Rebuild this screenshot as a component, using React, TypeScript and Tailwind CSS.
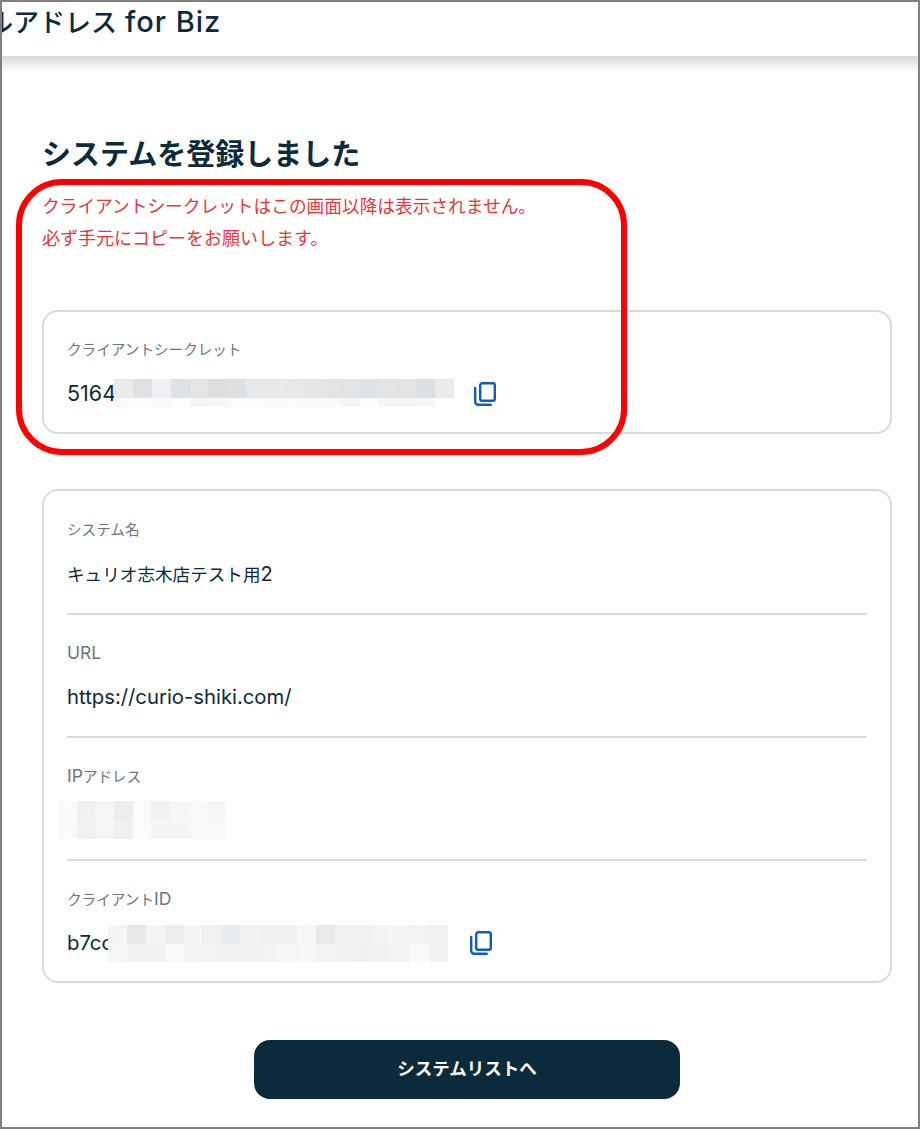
import React from 'react';

const FONT = "font-['Inter','Noto_Sans_CJK_JP',sans-serif]";

const secretMosaic = [
  ['#e9ebec', '#dfe1e3', '#eef0f3', '#dfe2e4', '#e3e5e7', '#dcdedf', '#dce0e3', '#e8e9eb', '#e8e9eb', '#e6e8ea', '#e4e6e8', '#e2e4e6', '#e1e3e5', '#dfe3e5', '#e2e4e6', '#e1e3e5', '#dde0e2', '#e9ebec'],
  ['#fafafa', '#fbfbfb', '#f9f9f9', '#fdfdfd', '#f6f6f6', '#f7f7f7', '#fcfcfc', '#fbfbfb', '#f8f8f8', '#fafafa', '#f8f8f8', '#f9f9f9', '#f5f5f5', '#fcfcfc', '#f6f6f6', '#f6f6f6', '#f7f7f7', '#ffffff'],
];

const ipMosaic = [
  ['#f9fafa', '#eff0f1', '#f5f6f6', '#eaecee', '#fafbfb', '#f0f1f1', '#f7f7f8', '#f7f8f8', '#f5f6f6'],
  ['#fafafa', '#f0f1f1', '#f6f6f6', '#eff1f1', '#fafbfb', '#f4f5f5', '#f5f5f5', '#f8f8f8', '#f7f8f8'],
];

const clientIdMosaic = [
  ['#f4f5f5', '#e6e8ea', '#f4f5f5', '#eceef0', '#f4f5f6', '#f0f1f2', '#e8ecee', '#f0f1f2', '#eff0f1', '#eff0f1', '#f5f6f6', '#e8eaec', '#f0f1f2', '#eff1f2', '#f3f4f5', '#f6f5f3', '#f2f3f4', '#f0f1f2'],
  ['#f6f6f7', '#f1f2f2', '#f0f1f1', '#f7f8f9', '#f4f5f5', '#f2f3f3', '#f0f1f1', '#f0f1f1', '#f2f3f3', '#f6f6f6', '#f7f7f7', '#f2f3f3', '#f1f2f2', '#eff0f1', '#f1f2f3', '#f2f3f3', '#f9fafb', '#f0f1f2'],
];

const Mosaic: React.FC<{ rows: string[][]; bottomHeight: number; cell?: number; className?: string }> = ({ rows, bottomHeight, cell = 18.9, className }) => (
  <div className={className}>
    {rows.map((row, i) => (
      <div key={i} className="flex" style={{ height: i === 0 ? 19 : bottomHeight }}>
        {row.map((color, j) => (
          <div key={j} className="shrink-0" style={{ width: cell, backgroundColor: color }} />
        ))}
      </div>
    ))}
  </div>
);

const CopyIcon: React.FC<{ className?: string }> = ({ className }) => (
  <svg viewBox="0 0 22 24" width="22" height="24" fill="none" stroke="#0b5fb8" strokeWidth="2.4" className={className}>
    <rect x="6.2" y="1.2" width="14.6" height="17.6" rx="2" />
    <path d="M1.2 6v13.8a3 3 0 0 0 3 3h12.6" strokeLinecap="round" />
  </svg>
);

const Label: React.FC<{ children: React.ReactNode }> = ({ children }) => (
  <p className="h-[20px] text-[14.6px] leading-[20px] text-[#6b7680]">{children}</p>
);

const Row: React.FC<{ label: React.ReactNode; children: React.ReactNode; last?: boolean }> = ({ label, children, last }) => (
  <div className={`h-[123px] pt-[28px] ${last ? '' : 'border-b-2 border-[#d8dadc]'}`}>
    <Label>{label}</Label>
    <div className="mt-[15px] flex h-[38px] items-center text-[20.3px] text-[#0b2a3b]">{children}</div>
  </div>
);

export default function App() {
  return (
    <div className={`relative h-[1129px] w-[920px] overflow-hidden border-t-2 border-r-2 border-b-2 border-l-2 border-[#808080] bg-white ${FONT}`}>
      {/* header, cut off at the left like in the capture */}
      <header className="h-[54px] overflow-hidden bg-white">
        <p className="-ml-[15px] flex items-baseline whitespace-nowrap pt-[2px] text-[26px] leading-[36px] font-medium text-[#0b2a3b]">
          ルアドレス<span className="ml-[8px] text-[29px] tracking-[1px]">for Biz</span>
        </p>
      </header>
      <div className="h-[16px] bg-gradient-to-b from-[#d5dadd] to-white" />

      <main className="pr-[26px] pl-[40px]">
        <h1 className="mt-[63px] h-[40px] text-[29px] leading-[40px] font-bold text-[#0b2a3b]">システムを登録しました</h1>

        <div className="mt-[16px] leading-[32px] text-[#e53838]">
          <p className="text-[17.7px]">クライアントシークレットはこの画面以降は表示されません。</p>
          <p className="text-[18px]">必ず手元にコピーをお願いします。</p>
        </div>

        <section className="mt-[55px] h-[124px] rounded-[16px] border-2 border-[#d8dadc] px-[23px] pt-[28px]">
          <Label>クライアントシークレット</Label>
          <div className="mt-[19px] flex h-[28px] items-center text-[21.5px] text-[#0b2a3b]">
            <span className="w-[47px] overflow-hidden whitespace-nowrap">5164</span>
            <Mosaic rows={secretMosaic} bottomHeight={9} />
            <CopyIcon className="mt-[2px] ml-[20px]" />
          </div>
        </section>

        <section className="mt-[55px] h-[494px] rounded-[16px] border-2 border-[#d8dadc] px-[23px] pt-[1px]">
          <Row label="システム名">
            <span className="text-[17.6px]">キュリオ志木店テスト用<span className="text-[20px]">2</span></span>
          </Row>
          <Row label={<span className="text-[17.5px]">URL</span>}>https://curio-shiki.com/</Row>
          <Row label={<><span className="text-[17.5px]">IP</span>アドレス</>}>
            <Mosaic rows={ipMosaic} bottomHeight={19} cell={18.67} className="-ml-[9px]" />
          </Row>
          <Row label={<>クライアント<span className="text-[17.5px]">ID</span></>} last>
            <span className="w-[41px] overflow-hidden whitespace-nowrap">b7cc</span>
            <Mosaic rows={clientIdMosaic} bottomHeight={18} />
            <CopyIcon className="ml-[22px]" />
          </Row>
        </section>

        <div className="mt-[57px] flex justify-center">
          <button className="h-[59px] w-[426px] rounded-[16px] bg-[#0b2a3b] text-[17.5px] font-bold text-white">システムリストへ</button>
        </div>
      </main>

      {/* red annotation drawn over the capture */}
      <div className="absolute top-[177px] left-[14px] h-[276px] w-[611px] rounded-[46px] border-[6px] border-[#ff0000]" />
    </div>
  );
}
